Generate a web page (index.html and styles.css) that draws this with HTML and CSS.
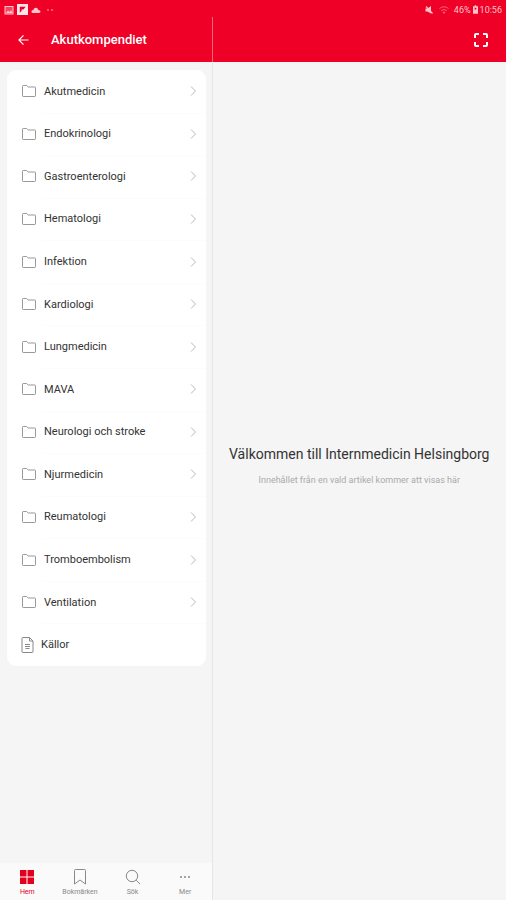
FILE: index.html
```html
<!DOCTYPE html>
<html lang="sv">
<head>
<meta charset="utf-8">
<meta name="viewport" content="width=device-width, initial-scale=1">
<title>Akutkompendiet</title>
<link rel="stylesheet" href="styles.css">
</head>
<body>
<svg width="0" height="0" class="sprite" aria-hidden="true">
  <symbol id="folder" viewBox="0 0 16 14"><path d="M1.5 3V2.2Q1.5 1.5 2.2 1.5H5.6L7.2 3H13.8Q14.5 3 14.5 3.7V11.8Q14.5 12.5 13.8 12.5H2.2Q1.5 12.5 1.5 11.8Z"/></symbol>
  <symbol id="chevron" viewBox="0 0 7 12"><path d="M1 1.5L5.5 6L1 10.5"/></symbol>
</svg>
<div class="statusbar">
  <div class="group">
    <svg class="status-icon" viewBox="0 0 10 10"><rect x="1" y="1.5" width="8" height="7.5" fill="currentColor" fill-opacity=".35" stroke="currentColor"/><path d="M2 8L4 5.5L5.5 7L7 5L8.500 8Z" fill="currentColor"/></svg>
    <svg class="status-icon flip" viewBox="0 0 12 12"><path fill-rule="evenodd" fill="currentColor" d="M0 0H12V12H0ZM3 3V9.500L5 7.500V6H7L9.500 3Z"/></svg>
    <svg class="status-icon" viewBox="0 0 10 10"><path fill="currentColor" d="M1.500 8Q0 7.500.500 6Q1 5 2.300 5Q3 2.500 5.200 2.800Q7 3 7.300 5Q9.500 5 9.500 6.600Q9.500 8 8 8Z"/></svg>
    <svg class="status-icon dots" viewBox="0 0 10 10"><circle cx="4" cy="5" r=".8" fill="currentColor"/><circle cx="8" cy="5" r=".8" fill="currentColor"/></svg>
  </div>
  <div class="group right">
    <svg class="status-icon" viewBox="0 0 10 10"><path fill="currentColor" d="M1.500 3.500H3.500L7 1V8.500L3.500 6.500H1.500Z"/><path d="M2 1.500L8.500 8.500" fill="none" stroke="currentColor" stroke-width="1.200"/></svg>
    <svg class="status-icon faint" viewBox="0 0 10 10"><path d="M.5 3.500Q5 0 9.500 3.500M2.200 5.500Q5 3.500 7.800 5.500" fill="none" stroke="currentColor"/><path d="M3.500 7Q5 6 6.500 7L5 9Z" fill="currentColor"/></svg>
    <span>46%</span>
    <svg class="battery" viewBox="0 0 6 10"><path fill-rule="evenodd" fill="currentColor" d="M2 0H4V1H6V10H0V1H2ZM2 3V5H4V3Z"/></svg>
    <span>10:56</span>
  </div>
</div>
<div class="app">
  <section class="side">
    <header class="bar">
      <button class="back" aria-label="Tillbaka"><svg viewBox="0 0 12 12"><path d="M11.500 6H1M6 1L1 6L6 11"/></svg></button>
      <h1>Akutkompendiet</h1>
    </header>
    <main class="scroll">
      <ul class="list">
        <li><a href="#"><svg class="folder"><use href="#folder"/></svg><span>Akutmedicin</span><svg class="chevron"><use href="#chevron"/></svg></a></li>
        <li><a href="#"><svg class="folder"><use href="#folder"/></svg><span>Endokrinologi</span><svg class="chevron"><use href="#chevron"/></svg></a></li>
        <li><a href="#"><svg class="folder"><use href="#folder"/></svg><span>Gastroenterologi</span><svg class="chevron"><use href="#chevron"/></svg></a></li>
        <li><a href="#"><svg class="folder"><use href="#folder"/></svg><span>Hematologi</span><svg class="chevron"><use href="#chevron"/></svg></a></li>
        <li><a href="#"><svg class="folder"><use href="#folder"/></svg><span>Infektion</span><svg class="chevron"><use href="#chevron"/></svg></a></li>
        <li><a href="#"><svg class="folder"><use href="#folder"/></svg><span>Kardiologi</span><svg class="chevron"><use href="#chevron"/></svg></a></li>
        <li><a href="#"><svg class="folder"><use href="#folder"/></svg><span>Lungmedicin</span><svg class="chevron"><use href="#chevron"/></svg></a></li>
        <li><a href="#"><svg class="folder"><use href="#folder"/></svg><span>MAVA</span><svg class="chevron"><use href="#chevron"/></svg></a></li>
        <li><a href="#"><svg class="folder"><use href="#folder"/></svg><span>Neurologi och stroke</span><svg class="chevron"><use href="#chevron"/></svg></a></li>
        <li><a href="#"><svg class="folder"><use href="#folder"/></svg><span>Njurmedicin</span><svg class="chevron"><use href="#chevron"/></svg></a></li>
        <li><a href="#"><svg class="folder"><use href="#folder"/></svg><span>Reumatologi</span><svg class="chevron"><use href="#chevron"/></svg></a></li>
        <li><a href="#"><svg class="folder"><use href="#folder"/></svg><span>Tromboembolism</span><svg class="chevron"><use href="#chevron"/></svg></a></li>
        <li><a href="#"><svg class="folder"><use href="#folder"/></svg><span>Ventilation</span><svg class="chevron"><use href="#chevron"/></svg></a></li>
        <li><a href="#"><svg class="doc" viewBox="0 0 13 18"><path d="M2 1.500H8.500L12 5V15.500Q12 16.500 11 16.500H2Q1 16.500 1 15.500V2.500Q1 1.500 2 1.500ZM8.500 1.500V5H12"/><path d="M4 8.500H9M4 10.500H9M4.500 12.500H8.500"/></svg><span>Källor</span></a></li>
      </ul>
    </main>
    <nav class="tabs">
      <a href="#" class="tab active"><svg viewBox="0 0 18 18"><path fill="currentColor" stroke="none" d="M2 2H8.500V8.500H2ZM9.500 2H16V8.500H9.500ZM2 9.500H8.500V16H2ZM9.500 9.500H16V16H9.500Z"/></svg><span>Hem</span></a>
      <a href="#" class="tab"><svg viewBox="0 0 18 18"><path d="M4.500 1.500H13.500Q14.500 1.500 14.500 2.500V16L9 12L3.500 16V2.500Q3.500 1.500 4.500 1.500Z"/></svg><span>Bokmärken</span></a>
      <a href="#" class="tab"><svg viewBox="0 0 18 18"><circle cx="8" cy="8" r="5.700"/><path d="M12.200 12.200L16 16"/></svg><span>Sök</span></a>
      <a href="#" class="tab"><svg viewBox="0 0 18 18"><g fill="currentColor" stroke="none"><circle cx="5" cy="9" r="1"/><circle cx="9" cy="9" r="1"/><circle cx="13" cy="9" r="1"/></g></svg><span>Mer</span></a>
    </nav>
  </section>
  <section class="detail">
    <header class="bar end">
      <button class="full" aria-label="Helskärm"><svg viewBox="0 0 14 14"><path d="M1 5V2Q1 1 2 1H5M9 1H12Q13 1 13 2V5M13 9V12Q13 13 12 13H9M5 13H2Q1 13 1 12V9"/></svg></button>
    </header>
    <div class="welcome">
      <h2>Välkommen till Internmedicin Helsingborg</h2>
      <p>Innehållet från en vald artikel kommer att visas här</p>
    </div>
  </section>
</div>
</body>
</html>
```
FILE: styles.css
```css
* { box-sizing: border-box; }

body {
  margin: 0;
  min-height: 100vh;
  display: flex;
  flex-direction: column;
  background: #f5f5f5;
  color: #333;
  font-family: Roboto, "Liberation Sans", sans-serif;
}

h1, h2, p, ul { margin: 0; padding: 0; }
a { color: inherit; text-decoration: none; }
button { border: 0; padding: 0; background: none; color: inherit; display: flex; }
svg { display: block; flex: none; fill: none; stroke: currentColor; }
.sprite { position: absolute; }

.statusbar {
  display: flex;
  justify-content: space-between;
  height: 17px;
  padding: 2px 4px 0;
  background: #ef0026;
  color: #ffc4cc;
  font-size: 9px;
}
.group { display: flex; align-items: center; gap: 3px; }
.group.right { gap: 2px; }
.status-icon { width: 10px; height: 10px; stroke: none; }
.right .status-icon { margin-right: 3px; }
.flip { width: 11px; height: 11px; color: #ffe6ea; }
.faint { opacity: 0.5; }
.battery { width: 5px; height: 9px; stroke: none; }

.app { flex: 1; display: flex; }
.side {
  width: 42%;
  display: flex;
  flex-direction: column;
  border-right: 1px solid #e6e6e6;
}
.detail { flex: 1; display: flex; flex-direction: column; }

.bar {
  display: flex;
  align-items: center;
  height: 45px;
  padding: 0 18px;
  background: #ef0026;
  color: #fff;
}
.side .bar { margin-right: -1px; border-right: 1px solid #f4667c; }
.bar.end { justify-content: flex-end; }
.bar h1 { margin-left: 22px; font-size: 13px; font-weight: 500; }
.back svg { width: 11px; height: 12px; stroke-width: 1.3; }
.full svg { width: 14px; height: 14px; stroke-width: 2; }

.scroll { flex: 1; padding: 8px 6px 16px 7px; }
.list {
  display: grid;
  grid-auto-rows: 1fr;
  min-height: 596px;
  background: #fff;
  border-radius: 9px;
  list-style: none;
}
.list li { display: flex; }
.list a {
  flex: 1;
  display: flex;
  align-items: center;
  gap: 7px;
  padding: 0 9px 0 14px;
  font-size: 11px;
}
.list span { flex: 1; }
.list li + li { background: linear-gradient(#fcfcfc, #fcfcfc) 36px 0 / 100% 1px no-repeat; }
.folder { width: 16px; height: 14px; color: #999; }
.doc { width: 13px; height: 18px; color: #888; }
.chevron { width: 7px; height: 12px; color: #bbb; }

.tabs {
  display: grid;
  grid-template-columns: repeat(4, 1fr);
  padding: 5px 0 3px 1px;
  background: #fafafa;
}
.tab {
  display: flex;
  flex-direction: column;
  align-items: center;
  gap: 1px;
  color: #888;
  font-size: 7px;
  line-height: 10px;
}
.tab svg { width: 18px; height: 18px; }
.tab.active { color: #e3001f; }

.welcome {
  flex: 1;
  display: flex;
  flex-direction: column;
  align-items: center;
  justify-content: center;
  gap: 10px;
  padding: 0 8px 32px;
  text-align: center;
}
.welcome h2 { font-size: 14px; line-height: 20px; font-weight: 400; }
.welcome p { color: #aaa; font-size: 9px; line-height: 12px; }
```
